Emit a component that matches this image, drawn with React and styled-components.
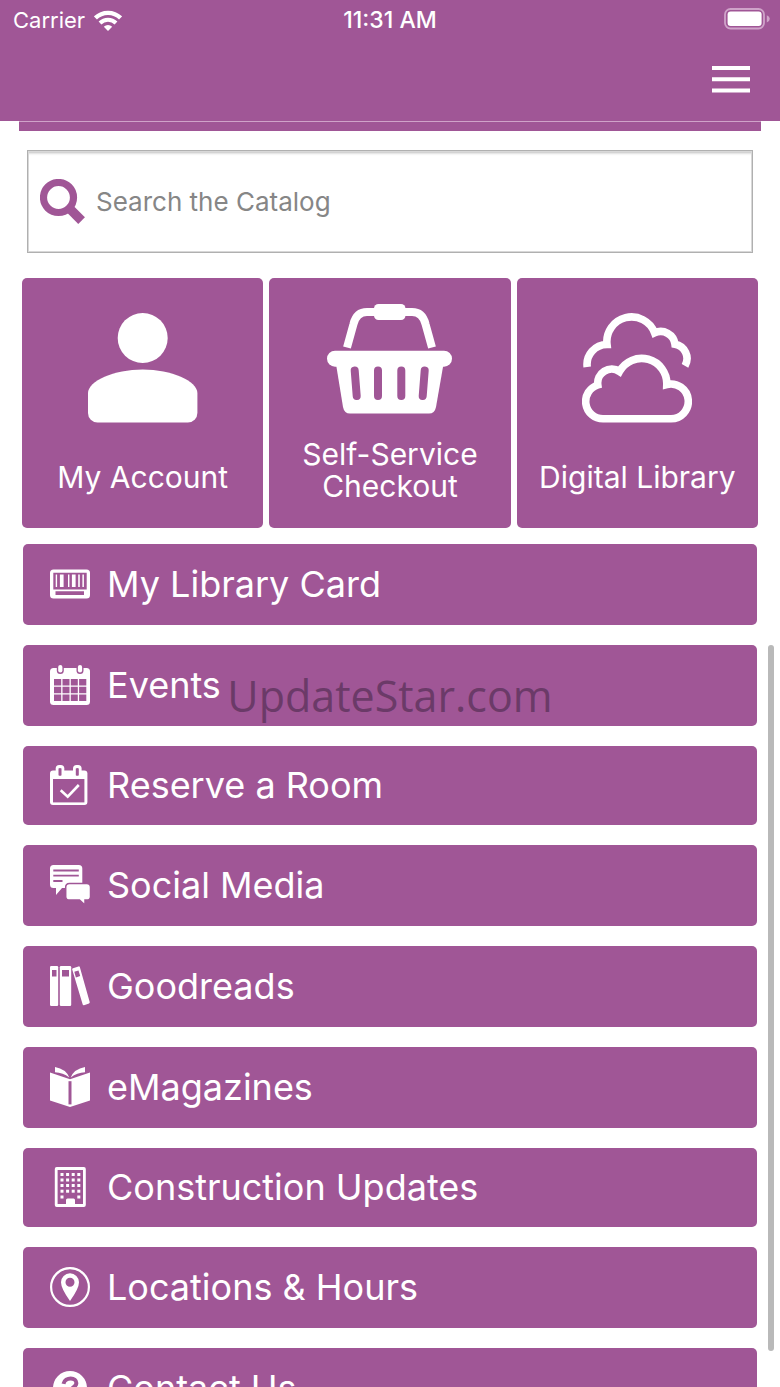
import React, { useState } from 'react';
import styled, { createGlobalStyle } from 'styled-components';

const PURPLE = '#a05696';

// icons
const WifiIcon = () => (
  <svg width="28" height="21" viewBox="0 0 28 21" fill="none" stroke="#fff" strokeWidth="4.4">
    <path d="M1.4 8a18 18 0 0 1 25.2 0" />
    <path d="M6 13a11.4 11.4 0 0 1 16 0" strokeWidth="4" />
    <path d="M14 21l-4.2-4.3a6 6 0 0 1 8.4 0z" fill="#fff" stroke="none" />
  </svg>
);

const BatteryIcon = () => (
  <svg width="46" height="22" viewBox="0 0 46 22">
    <rect x="1" y="1" width="39" height="19.5" rx="5.5" fill="none" stroke="#cfa3c9" strokeWidth="1.8" />
    <rect x="3.6" y="3.6" width="34" height="14.4" rx="3" fill="#fff" />
    <path d="M42.8 7.2q3 1.2 3 3.6t-3 3.6z" fill="#cfa3c9" />
  </svg>
);

const MenuIcon = () => (
  <svg width="38" height="27" viewBox="0 0 38 27" fill="#fff">
    <path d="M0 0h38v4H0zM0 11.3h38v4H0zM0 22.6h38v4H0z" />
  </svg>
);

const SearchIcon = () => (
  <svg width="46" height="46" viewBox="0 0 46 46" fill="none" stroke={PURPLE}>
    <circle cx="18.5" cy="18.5" r="15" strokeWidth="7.2" />
    <path d="M28 28l13.6 13.6" strokeWidth="9.4" />
  </svg>
);

const AccountIcon = () => (
  <svg width="110" height="110" viewBox="0 0 110 110" fill="#fff">
    <circle cx="54.7" cy="25" r="25" />
    <path d="M0 80C0 68 26 56.4 54.7 56.4S109.4 68 109.4 80v20a9.5 9.5 0 0 1-9.5 9.5H9.5A9.5 9.5 0 0 1 0 100z" />
  </svg>
);

const BasketIcon = () => (
  <svg width="126" height="110" viewBox="0 0 126 110" fill="#fff">
    <path d="M20 43.5L26.500 20Q29.500 8 40 8h45q10.500 0 13.500 12L105 43.500" fill="none" stroke="#fff" strokeWidth="8" />
    <rect x="47" y="0" width="31.5" height="16" rx="4.5" />
    <rect x="0" y="46.7" width="125" height="16" rx="8" />
    <path d="M9 60h107.5l-7.5 43q-1.3 6.6-7 6.6H23q-5.7 0-7-6.600z" />
    <g stroke={PURPLE} strokeWidth="8" strokeLinecap="round">
      <path d="M27.7 66.5l2 25.5M51 66.5V92M74.3 66.5V92M97.7 66.500l-2 25.500" />
    </g>
  </svg>
);

const CloudsIcon = () => (
  <svg width="110" height="110" viewBox="0 0 110 110" fill="none" stroke="#fff" strokeWidth="7.6">
    <path d="M5.2 54A20 20 0 0 1 25 31.5A24.7 24.7 0 0 1 72.6 19.8A14.500 14.500 0 0 1 93 31.200A14.500 14.500 0 0 1 103 52.800" />
    <path d="M21 105.8A17.3 17.3 0 0 1 15.8 72A14 14 0 0 1 37.5 58.500A25.2 25.2 0 0 1 84.800 71.500A17.400 17.400 0 1 1 88.300 105.800z" />
  </svg>
);

const CardIcon = () => (
  <svg width="40" height="40" viewBox="0 0 40 40" fill="#fff">
    <rect y="5.5" width="40" height="29" rx="3.5" />
    <path d="M3.3 8.7h33.4v16.8H3.3zM5.5 27.2h28.5v3.900h-28.500z" fill={PURPLE} />
    <path d="M5.7 10.5h1.4v12.5H5.7zM9.9 10.5h3.7v12.5H9.9zM18 10.5h1.4v12.5H18zM21.9 10.5h3.7v12.5h-3.7zM28.2 10.5h1.6v12.5h-1.6zM32.4 10.5h1.5v12.5h-1.5z" />
  </svg>
);

const EventsIcon = () => (
  <svg width="40" height="40" viewBox="0 0 40 40" fill="#fff">
    <rect y="3" width="40" height="37" rx="3.5" />
    <rect x="6.8" y="-1.5" width="7" height="10.5" rx="3.5" fill={PURPLE} />
    <rect x="26.5" y="-1.5" width="7" height="10.5" rx="3.5" fill={PURPLE} />
    <rect x="8.2" width="4.2" height="7.6" rx="2.1" />
    <rect x="27.9" width="4.2" height="7.6" rx="2.1" />
    <path
      d="M4 14h7.2v6.5H4zM12.5 14h7v6.5h-7zM20.8 14h7v6.5h-7zM29.1 14h7.2v6.5h-7.2zM4 21.8h7.2v6.5H4zM12.5 21.8h7v6.5h-7zM20.8 21.8h7v6.5h-7zM29.1 21.8h7.2v6.5h-7.2zM4 29.6h7.2V36H4zM12.5 29.6h7V36h-7zM20.8 29.6h7V36h-7zM29.1 29.6h7.2V36h-7.2z"
      fill={PURPLE}
    />
  </svg>
);

const RoomIcon = () => (
  <svg width="40" height="40" viewBox="0 0 40 40" fill="#fff">
    <rect y="5.5" width="37.4" height="34.5" rx="3" />
    <rect x="5.7" width="8.6" height="12.5" rx="3.5" />
    <rect x="23" width="8.6" height="12.5" rx="3.5" />
    <path d="M3 14h31.4v23.4H3z" fill={PURPLE} />
    <path d="M8.5 3.5v6.7q1.5 1.2 3 0V3.5q-1.5-1.2-3 0zM25.8 3.5v6.7q1.5 1.2 3 0V3.5q-1.5-1.2-3 0z" fill={PURPLE} />
    <path d="M10.7 25.3l7 6.4L28.8 20" fill="none" stroke="#fff" strokeWidth="2.6" />
  </svg>
);

const ChatIcon = () => (
  <svg width="40" height="40" viewBox="0 0 40 40" fill="#fff">
    <path d="M3.5 0h25.3q3.5 0 3.5 3.5v16q0 3.5-3.5 3.5H12l-6 7v-7H3.5Q0 23 0 19.5v-16Q0 0 3.5 0z" />
    <path d="M3.3 5.5h25.5M3.3 10.7h25.5M3.3 16h9.2" stroke={PURPLE} strokeWidth="1.8" />
    <path
      d="M19.5 18.5h17.2q3.8 0 3.8 3.8v9.5q0 3.3-3.8 3.3H35v5l-5.5-5h-10q-3.8 0-3.8-3.3v-9.5q0-3.8 3.8-3.8z"
      stroke={PURPLE}
      strokeWidth="1.5"
    />
  </svg>
);

const BooksIcon = () => (
  <svg width="40" height="40" viewBox="0 0 40 40" fill="#fff">
    <rect width="8.2" height="40" rx="1.2" />
    <rect x="9.8" width="11.4" height="40" rx="1.2" />
    <path d="M23 2.2l5.5-1.8q1-.3 1.3.7l9.9 35q.3 1-.7 1.4l-5 1.7q-1 .3-1.3-.7l-10.5-35q-.3-1 .8-1.3z" />
    <path d="M2 4h4.5v6.5H2zM12 4h7v6.5h-7zM24.3 5.8l4.2-1.4 1.7 5.6-4.3 1.6z" fill={PURPLE} />
  </svg>
);

const MagazineIcon = () => (
  <svg width="40" height="40" viewBox="0 0 40 40" fill="#fff">
    <path d="M0 5.5l20 6.7 20-6.7v28L20 40 0 33.5z" />
    <path d="M5 0Q16 2 19.3 10.5Q13 5.5 5 5.3zM35 0Q24 2 20.7 10.5Q27 5.5 35 5.3z" />
    <path d="M18.5 14.2h3v23.2h-3z" fill={PURPLE} />
  </svg>
);

const BuildingIcon = () => (
  <svg width="40" height="40" viewBox="0 0 40 40" fill="#fff">
    <rect x="6.2" y="1.5" width="28.2" height="37" rx=".5" fill="none" stroke="#fff" strokeWidth="2.8" />
    {[7.5, 13, 18.5, 24.2, 30].map((y, row) =>
      [12, 17.6, 23.2, 28.8].map((x, col) =>
        row === 4 && (col === 1 || col === 2) ? null : <rect key={`${x}-${y}`} x={x - 1.5} y={y - 1.5} width="3" height="3" />
      )
    )}
    <path d="M16 38v-5q0-1.5 1.5-1.5h6q1.5 0 1.5 1.5v5z" />
  </svg>
);

const PinIcon = () => (
  <svg width="40" height="40" viewBox="0 0 40 40" fill="#fff">
    <circle cx="20" cy="20" r="18.9" fill="none" stroke="#fff" strokeWidth="2.2" />
    <path
      fillRule="evenodd"
      d="M20 34Q11 21.5 11 15.3a9 9 0 0 1 18 0Q29 21.5 20 34zM20 10.7a4.5 4.5 0 1 0 0 9 4.5 4.5 0 0 0 0-9z"
    />
  </svg>
);

const QuestionIcon = () => (
  <svg width="40" height="40" viewBox="0 0 40 40">
    <circle cx="20" cy="20" r="17" fill="#fff" />
    <path d="M13.5 15.8C15 8.5 27 9 26.3 15.5C26 19.5 20.5 19 20.5 24.5" fill="none" stroke={PURPLE} strokeWidth="4" />
    <circle cx="20.5" cy="29.5" r="2.3" fill={PURPLE} />
  </svg>
);

const tiles = [
  { label: 'My Account', icon: <AccountIcon /> },
  { label: 'Self-Service Checkout', icon: <BasketIcon />, tight: true },
  { label: 'Digital Library', icon: <CloudsIcon /> },
];

const links = [
  { label: 'My Library Card', icon: <CardIcon /> },
  { label: 'Events', icon: <EventsIcon /> },
  { label: 'Reserve a Room', icon: <RoomIcon />, compact: true },
  { label: 'Social Media', icon: <ChatIcon /> },
  { label: 'Goodreads', icon: <BooksIcon /> },
  { label: 'eMagazines', icon: <MagazineIcon /> },
  { label: 'Construction Updates', icon: <BuildingIcon />, compact: true },
  { label: 'Locations & Hours', icon: <PinIcon /> },
  { label: 'Contact Us', icon: <QuestionIcon /> },
];

const App = () => {
  const [keyword, setKeyword] = useState('');

  return (
    <>
      <GlobalStyle />
      <Screen>
        <Header>
          <StatusBar>
            <Carrier>
              Carrier <WifiIcon />
            </Carrier>
            <Clock>11:31 AM</Clock>
            <Battery>
              <BatteryIcon />
            </Battery>
          </StatusBar>
          <NavBar>
            <MenuButton type="button" aria-label="Menu">
              <MenuIcon />
            </MenuButton>
          </NavBar>
        </Header>
        <Content>
          <Banner />
          <SearchForm role="search" onSubmit={e => e.preventDefault()}>
            <label htmlFor="catalog" aria-label="Search the Catalog">
              <SearchIcon />
            </label>
            <SearchInput
              id="catalog"
              type="text"
              placeholder="Search the Catalog"
              value={keyword}
              onChange={e => setKeyword(e.target.value)}
            />
          </SearchForm>
          <Tiles>
            {tiles.map(({ label, icon, tight }) => (
              <Tile key={label} href="#" $tight={tight}>
                {icon}
                <span>{label}</span>
              </Tile>
            ))}
          </Tiles>
          <Links>
            {links.map(({ label, icon, compact }) => (
              <LinkRow key={label} href="#" $compact={compact}>
                {icon}
                <span>{label}</span>
              </LinkRow>
            ))}
          </Links>
        </Content>
        <ScrollThumb />
        <Watermark>UpdateStar.com</Watermark>
      </Screen>
    </>
  );
};

export default App;

const GlobalStyle = createGlobalStyle`
  * {
    box-sizing: border-box;
  }
  body {
    margin: 0;
    background: #fff;
    font-family: Inter, 'Liberation Sans', sans-serif;
  }
  svg {
    display: block;
    flex: none;
  }
`;

const Screen = styled.div`
  position: relative;
  display: flex;
  flex-direction: column;
  height: 100vh;
  overflow: hidden;
`;

const Header = styled.header`
  flex: none;
  background: ${PURPLE};
  color: #fff;
`;

const StatusBar = styled.div`
  display: grid;
  grid-template-columns: 1fr auto 1fr;
  align-items: center;
  height: 40px;
  padding: 0 10px;
  font-size: 22px;
`;

const Carrier = styled.span`
  display: flex;
  align-items: center;
  gap: 9px;
  padding-left: 3px;
`;

const Clock = styled.span`
  font-size: 23px;
  font-weight: 500;
`;

const Battery = styled.span`
  justify-self: end;
  padding-bottom: 2px;
`;

const NavBar = styled.nav`
  display: flex;
  justify-content: flex-end;
  align-items: center;
  height: 81px;
  padding: 0 30px 2px;
`;

const MenuButton = styled.button`
  padding: 0;
  border: none;
  background: none;
  cursor: pointer;
`;

const Content = styled.main`
  flex: 1;
  min-height: 0;
  overflow: hidden;
`;

const Banner = styled.div`
  height: 10px;
  margin: 0 19px;
  border-top: 1px solid #cfa3c9;
  background: ${PURPLE};
`;

const SearchForm = styled.form`
  display: flex;
  align-items: center;
  gap: 10px;
  height: 103px;
  margin: 19px 27px 25px;
  padding: 0 12px;
  border: 1px solid #b0b0b0;
  box-shadow: inset 0 0 0 1px #d8d8d8, inset 0 4px 3px -2px #bbb;
`;

const SearchInput = styled.input`
  flex: 1;
  min-width: 0;
  padding: 0;
  border: none;
  outline: none;
  background: none;
  color: #333;
  font-family: inherit;
  font-size: 26px;

  &::placeholder {
    color: #868686;
    opacity: 1;
  }
`;

const Tiles = styled.div`
  display: grid;
  grid-template-columns: repeat(3, 1fr);
  gap: 6px;
  margin: 0 22px 16px;
`;

const Tile = styled.a`
  display: flex;
  flex-direction: column;
  align-items: center;
  justify-content: center;
  gap: ${({ $tight }) => ($tight ? '24px' : '38px')};
  height: 250px;
  padding: 0 20px;
  border-radius: 5px;
  background: ${PURPLE};
  color: #fff;
  font-size: 30px;
  line-height: 32px;
  text-align: center;
  text-decoration: none;
`;

const Links = styled.nav`
  display: flex;
  flex-direction: column;
  gap: 20px;
  margin: 0 23px;
`;

const LinkRow = styled.a`
  display: flex;
  align-items: center;
  gap: 17px;
  height: ${({ $compact }) => ($compact ? '79px' : '81px')};
  padding: 0 27px 2px;
  border-radius: 5px;
  background: ${PURPLE};
  color: #fff;
  font-size: 36px;
  text-decoration: none;
`;

const ScrollThumb = styled.div`
  position: absolute;
  top: 645px;
  right: 6px;
  bottom: 36px;
  width: 6px;
  border-radius: 3px;
  background: #b9b9b9;
`;

const Watermark = styled.div`
  position: absolute;
  top: 50%;
  left: 50%;
  transform: translate(-50%, -50%);
  padding-top: 4px;
  color: #6b3a68;
  font-family: 'Open Sans', 'Noto Sans', sans-serif;
  font-size: 43px;
  line-height: 60px;
  pointer-events: none;
`;
